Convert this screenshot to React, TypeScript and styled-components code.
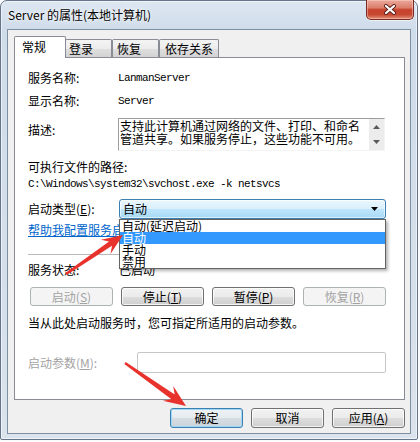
import React from "react";
import styled, { createGlobalStyle, css } from "styled-components";

const GlobalStyle = createGlobalStyle`
  html, body { margin: 0; padding: 0; background: #ffffff; }
  body {
    width: 420px; height: 442px; overflow: hidden;
    font-family: "Noto Sans CJK SC", "Liberation Sans", sans-serif;
    font-size: 12px; color: #000;
  }
`;

const Stage = styled.div`
  position: relative;
  width: 420px;
  height: 442px;
  overflow: hidden;
  background: #fbfbfb;
`;

const Window = styled.div`
  box-sizing: border-box;
  width: 418px;
  height: 440px;
  border: 1px solid #66768a;
  border-radius: 7px 7px 2px 2px;
  background: linear-gradient(180deg, #dde7f2 0px, #cfdcea 28px, #d4dfea 60%, #dbe3ec 100%);
  box-shadow: inset 0 0 0 1px rgba(255, 255, 255, 0.55);
  padding: 0 6px 5px 6px;
  display: flex;
  flex-direction: column;
`;

const TitleBar = styled.div`
  height: 28px;
  flex: none;
  display: flex;
  justify-content: space-between;
  align-items: flex-start;
`;

const TitleText = styled.span`
  margin: 7px 0 0 1px;
  line-height: 14px;
  font-size: 12px;
  color: #000;
  text-shadow: 0 0 6px rgba(255, 255, 255, 0.95), 0 0 2px rgba(255, 255, 255, 0.9);
  white-space: nowrap;
`;

const CloseButton = styled.div`
  box-sizing: border-box;
  width: 48px;
  height: 20px;
  margin: -1px -3px 0 0;
  border: 1px solid #7a2a20;
  border-top: none;
  border-radius: 0 0 5px 5px;
  background: linear-gradient(180deg, #eaa89a 0%, #dc7f6c 40%, #c6412b 52%, #c84a33 78%, #e2917a 100%);
  box-shadow: inset 0 0 0 1px rgba(255, 220, 210, 0.45), 0 1px 0 rgba(255, 255, 255, 0.6);
  display: flex;
  align-items: center;
  justify-content: center;
`;

const Client = styled.div`
  flex: 1;
  box-sizing: border-box;
  background: #f0f0f0;
  border: 1px solid #7f8fa2;
  padding: 6px 5px 0 6px;
  display: flex;
  flex-direction: column;
`;

const TabBar = styled.div`
  height: 21px;
  display: flex;
  align-items: flex-end;
  position: relative;
  z-index: 1;
`;

const Tab = styled.div<{ $w: number; $active?: boolean; $ml?: number; $pl: number }>`
  box-sizing: border-box;
  width: ${(p) => p.$w}px;
  margin-left: ${(p) => p.$ml ?? 0}px;
  border: 1px solid #898c95;
  border-bottom: none;
  padding-left: ${(p) => p.$pl}px;
  line-height: 14px;
  white-space: nowrap;
  ${(p) =>
    p.$active
      ? css`
          height: 22px;
          margin-bottom: -1px;
          padding-top: 3px;
          background: #ffffff;
          border-radius: 2px 2px 0 0;
        `
      : css`
          height: 18px;
          padding-top: 2px;
          background: linear-gradient(180deg, #f4f4f4 0%, #ececec 50%, #dfdfdf 51%, #d3d3d3 100%);
          border-radius: 2px 2px 0 0;
        `}
`;

const Panel = styled.div`
  box-sizing: border-box;
  width: 391px;
  height: 343px;
  flex: none;
  background: #ffffff;
  border: 1px solid #898c95;
  padding: 13px 18px 0 13px;
  display: flex;
  flex-direction: column;
`;

const Row = styled.div<{ $mt?: number; $h?: number; $top?: boolean }>`
  display: flex;
  align-items: ${(p) => (p.$top ? "flex-start" : "center")};
  margin-top: ${(p) => p.$mt ?? 0}px;
  height: ${(p) => p.$h ?? 14}px;
  line-height: 14px;
  white-space: nowrap;
`;

const Label = styled.span<{ $w?: number; $disabled?: boolean; $mt?: number }>`
  flex: none;
  width: ${(p) => p.$w ?? 90}px;
  margin-top: ${(p) => p.$mt ?? 0}px;
  color: ${(p) => (p.$disabled ? "#a3a3a3" : "#000")};
  white-space: nowrap;
`;

const Mono = styled.span`
  font-family: "Liberation Mono", "DejaVu Sans Mono", monospace;
  font-size: 11px;
  letter-spacing: -0.6px;
  white-space: pre;
`;

const U = styled.span`
  text-decoration: underline;
`;

const DescBox = styled.div`
  box-sizing: border-box;
  width: 267px;
  height: 33px;
  border-top: 1px solid #9d9d9d;
  border-left: 1px solid #9d9d9d;
  border-right: 1px solid #f4f4f4;
  border-bottom: 1px solid #f4f4f4;
  display: flex;
  background: #ffffff;
`;

const DescText = styled.div`
  flex: 1;
  padding-left: 1px;
  line-height: 13px;
  white-space: nowrap;
`;

const ScrollBar = styled.div`
  width: 15px;
  flex: none;
  background: #ececec;
  display: flex;
  flex-direction: column;
  align-items: center;
  justify-content: space-around;
`;

const ComboWrap = styled.div`
  position: relative;
  margin-left: 1px;
  width: 267px;
  height: 20px;
  z-index: 5;
`;

const Combo = styled.div`
  box-sizing: border-box;
  height: 20px;
  border: 1px solid #3c7fb1;
  border-radius: 3px;
  background: linear-gradient(180deg, #eaf6fd 0%, #d9f0fc 50%, #bee6fd 51%, #a7d9f5 100%);
  box-shadow: inset 0 0 0 1px rgba(255, 255, 255, 0.6);
  padding: 0 7px 0 3px;
  display: flex;
  align-items: center;
  justify-content: space-between;
  line-height: 14px;
`;

const DropList = styled.div`
  position: absolute;
  left: 0;
  top: 20px;
  box-sizing: border-box;
  width: 267px;
  border: 1px solid #646464;
  background: #ffffff;
  box-shadow: 2px 2px 3px rgba(0, 0, 0, 0.3);
  display: flex;
  flex-direction: column;
`;

const ListItem = styled.div<{ $selected?: boolean }>`
  height: 12px;
  line-height: 12px;
  padding-left: 2px;
  white-space: nowrap;
  ${(p) =>
    p.$selected &&
    css`
      background: #3399ff;
      color: #ffffff;
    `}
`;

const Link = styled.span`
  color: #0066cc;
  text-decoration: underline;
`;

const Separator = styled.div<{ $mt: number }>`
  margin-top: ${(p) => p.$mt}px;
  height: 1px;
  flex: none;
  background: #b9b9b9;
`;

const ButtonRow = styled.div<{ $mt: number; $end?: boolean }>`
  margin-top: ${(p) => p.$mt}px;
  display: flex;
  justify-content: ${(p) => (p.$end ? "flex-end" : "space-between")};
  gap: 8px;
  padding-left: ${(p) => (p.$end ? 0 : 2)}px;
  flex: none;
`;

const Button = styled.div<{ $w: number; $h: number; $disabled?: boolean; $default?: boolean }>`
  box-sizing: border-box;
  width: ${(p) => p.$w}px;
  height: ${(p) => p.$h}px;
  border: 1px solid #707070;
  border-radius: 3px;
  background: linear-gradient(180deg, #f2f2f2 0%, #ebebeb 50%, #dddddd 51%, #cfcfcf 100%);
  box-shadow: inset 0 0 0 1px rgba(255, 255, 255, 0.75);
  display: flex;
  align-items: center;
  justify-content: center;
  line-height: 14px;
  color: #000;
  white-space: nowrap;
  ${(p) =>
    p.$disabled &&
    css`
      border-color: #adb2b5;
      background: #f4f4f4;
      box-shadow: none;
      color: #a3a3a3;
    `}
  ${(p) =>
    p.$default &&
    css`
      border-color: #3c7fb1;
      box-shadow: inset 0 0 0 1px #9fd8f7;
      background: linear-gradient(180deg, #eef2f5 0%, #e6ebef 50%, #d6dde3 51%, #ccd4db 100%);
    `}
`;

const ParamInput = styled.div`
  box-sizing: border-box;
  width: 250px;
  height: 21px;
  border: 1px solid #c6c6c6;
  border-radius: 2px;
  background: #ffffff;
`;

const Overlay = styled.svg`
  position: absolute;
  left: 0;
  top: 0;
  pointer-events: none;
  z-index: 20;
`;

function arrowPoints(
  x1: number,
  y1: number,
  x2: number,
  y2: number,
  headLen: number,
  headHalf: number,
  shaftHalf: number,
  tailHalf: number
) {
  const dx = x2 - x1;
  const dy = y2 - y1;
  const L = Math.hypot(dx, dy);
  const ux = dx / L;
  const uy = dy / L;
  const nx = -uy;
  const ny = ux;
  const neckX = x2 - ux * headLen * 0.72;
  const neckY = y2 - uy * headLen * 0.72;
  const barbX = x2 - ux * headLen;
  const barbY = y2 - uy * headLen;
  const pts: [number, number][] = [
    [x1 + nx * tailHalf, y1 + ny * tailHalf],
    [neckX + nx * shaftHalf, neckY + ny * shaftHalf],
    [barbX + nx * headHalf, barbY + ny * headHalf],
    [x2, y2],
    [barbX - nx * headHalf, barbY - ny * headHalf],
    [neckX - nx * shaftHalf, neckY - ny * shaftHalf],
    [x1 - nx * tailHalf, y1 - ny * tailHalf],
  ];
  return pts.map(([x, y]) => `${x.toFixed(1)},${y.toFixed(1)}`).join(" ");
}

const ArrowUp = () => (
  <svg width="7" height="4" viewBox="0 0 7 4">
    <path d="M3.5 0 L7 4 L0 4 Z" fill="#5a5a5a" />
  </svg>
);
const ArrowDown = ({ color = "#5a5a5a" }: { color?: string }) => (
  <svg width="7" height="4" viewBox="0 0 7 4">
    <path d="M0 0 L7 0 L3.5 4 Z" fill={color} />
  </svg>
);

export default function App() {
  return (
    <Stage>
      <GlobalStyle />
      <Window>
        <TitleBar>
          <TitleText>Server 的属性(本地计算机)</TitleText>
          <CloseButton>
            <svg width="12" height="11" viewBox="0 0 12 11">
              <path d="M2 2 L10 9 M10 2 L2 9" stroke="#5a1f17" strokeWidth="4" strokeLinecap="round" />
              <path d="M2 2 L10 9 M10 2 L2 9" stroke="#ffffff" strokeWidth="2.2" strokeLinecap="round" />
            </svg>
          </CloseButton>
        </TitleBar>
        <Client>
          <TabBar>
            <Tab $w={52} $pl={7} $active>常规</Tab>
            <Tab $w={47} $pl={3} $ml={-1}>登录</Tab>
            <Tab $w={47} $pl={4} $ml={0}>恢复</Tab>
            <Tab $w={60} $pl={5} $ml={0}>依存关系</Tab>
          </TabBar>
          <Panel>
            <Row>
              <Label>服务名称:</Label>
              <Mono>LanmanServer</Mono>
            </Row>
            <Row $mt={9}>
              <Label>显示名称:</Label>
              <Mono>Server</Mono>
            </Row>
            <Row $mt={10} $h={33} $top>
              <Label $mt={5}>描述:</Label>
              <DescBox>
                <DescText>
                  支持此计算机通过网络的文件、打印、和命名
                  <br />
                  管道共享。如果服务停止，这些功能不可用。
                </DescText>
                <ScrollBar>
                  <ArrowUp />
                  <ArrowDown />
                </ScrollBar>
              </DescBox>
            </Row>
            <Row $mt={9}>
              <Label $w={200}>可执行文件的路径:</Label>
            </Row>
            <Row $mt={3}>
              <Mono>C:\Windows\system32\svchost.exe -k netsvcs</Mono>
            </Row>
            <Row $mt={8} $h={20}>
              <Label>
                启动类型(<U>E</U>):
              </Label>
              <ComboWrap>
                <Combo>
                  <span>自动</span>
                  <ArrowDown color="#000000" />
                </Combo>
                <DropList>
                  <ListItem>自动(延迟启动)</ListItem>
                  <ListItem $selected>自动</ListItem>
                  <ListItem>手动</ListItem>
                  <ListItem>禁用</ListItem>
                </DropList>
              </ComboWrap>
            </Row>
            <Row $mt={4}>
              <Link>帮助我配置服务启动选项。</Link>
            </Row>
            <Separator $mt={17} />
            <Row $mt={8}>
              <Label $w={91}>服务状态:</Label>
              <span>已启动</span>
            </Row>
            <ButtonRow $mt={10}>
              <Button $w={83} $h={19} $disabled>
                启动(<U>S</U>)
              </Button>
              <Button $w={83} $h={19}>
                停止(<U>T</U>)
              </Button>
              <Button $w={83} $h={19}>
                暂停(<U>P</U>)
              </Button>
              <Button $w={83} $h={19} $disabled>
                恢复(<U>R</U>)
              </Button>
            </ButtonRow>
            <Row $mt={10}>
              <span>当从此处启动服务时，您可指定所适用的启动参数。</span>
            </Row>
            <Row $mt={22} $h={21}>
              <Label $w={109} $disabled>
                启动参数(<U>M</U>):
              </Label>
              <ParamInput />
            </Row>
          </Panel>
          <ButtonRow $mt={8} $end>
            <Button $w={73} $h={20} $default>
              确定
            </Button>
            <Button $w={73} $h={20}>
              取消
            </Button>
            <Button $w={73} $h={20}>
              应用(<U>A</U>)
            </Button>
          </ButtonRow>
        </Client>
      </Window>
      <Overlay width="420" height="442" viewBox="0 0 420 442">
        <polygon points={arrowPoints(66, 274, 123, 235, 21, 8.5, 2.6, 1.2)} fill="#e8322c" />
        <polygon points={arrowPoints(125, 363, 186, 406, 22, 9, 2.8, 1.2)} fill="#e8322c" />
      </Overlay>
    </Stage>
  );
}
